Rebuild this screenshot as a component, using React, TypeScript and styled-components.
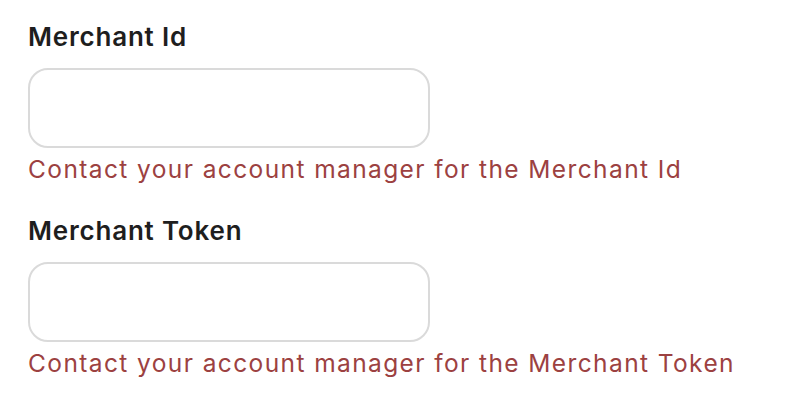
import React from "react";
import styled, { createGlobalStyle } from "styled-components";

const Global = createGlobalStyle`
  html, body { margin: 0; padding: 0; background: #ffffff; }
  body { font-family: Inter, "Noto Sans", sans-serif; }
`;

const Form = styled.div`
  display: flex;
  flex-direction: column;
  gap: 28px;
  padding: 20px 0 0 28px;
`;

const Field = styled.div`
  display: flex;
  flex-direction: column;
`;

const Label = styled.label`
  font-size: 26px;
  font-weight: 600;
  line-height: 34px;
  letter-spacing: 0.8px;
  color: #1e1e1e;
  margin-bottom: 14px;
`;

const Input = styled.input`
  box-sizing: border-box;
  width: 402px;
  height: 80px;
  border: 2px solid #dadada;
  border-radius: 20px;
  background: #fff;
  outline: none;
  padding: 0 20px;
  font: inherit;
`;

const Help = styled.div`
  font-size: 24.5px;
  line-height: 34px;
  letter-spacing: 1.4px;
  color: #9c4141;
  margin-top: 4px;
`;

const fields = [
  { label: "Merchant Id", help: "Contact your account manager for the Merchant Id" },
  { label: "Merchant Token", help: "Contact your account manager for the Merchant Token" },
];

export default function App() {
  return (
    <>
      <Global />
      <Form>
        {fields.map((f) => (
          <Field key={f.label}>
            <Label>{f.label}</Label>
            <Input type="text" />
            <Help>{f.help}</Help>
          </Field>
        ))}
      </Form>
    </>
  );
}
